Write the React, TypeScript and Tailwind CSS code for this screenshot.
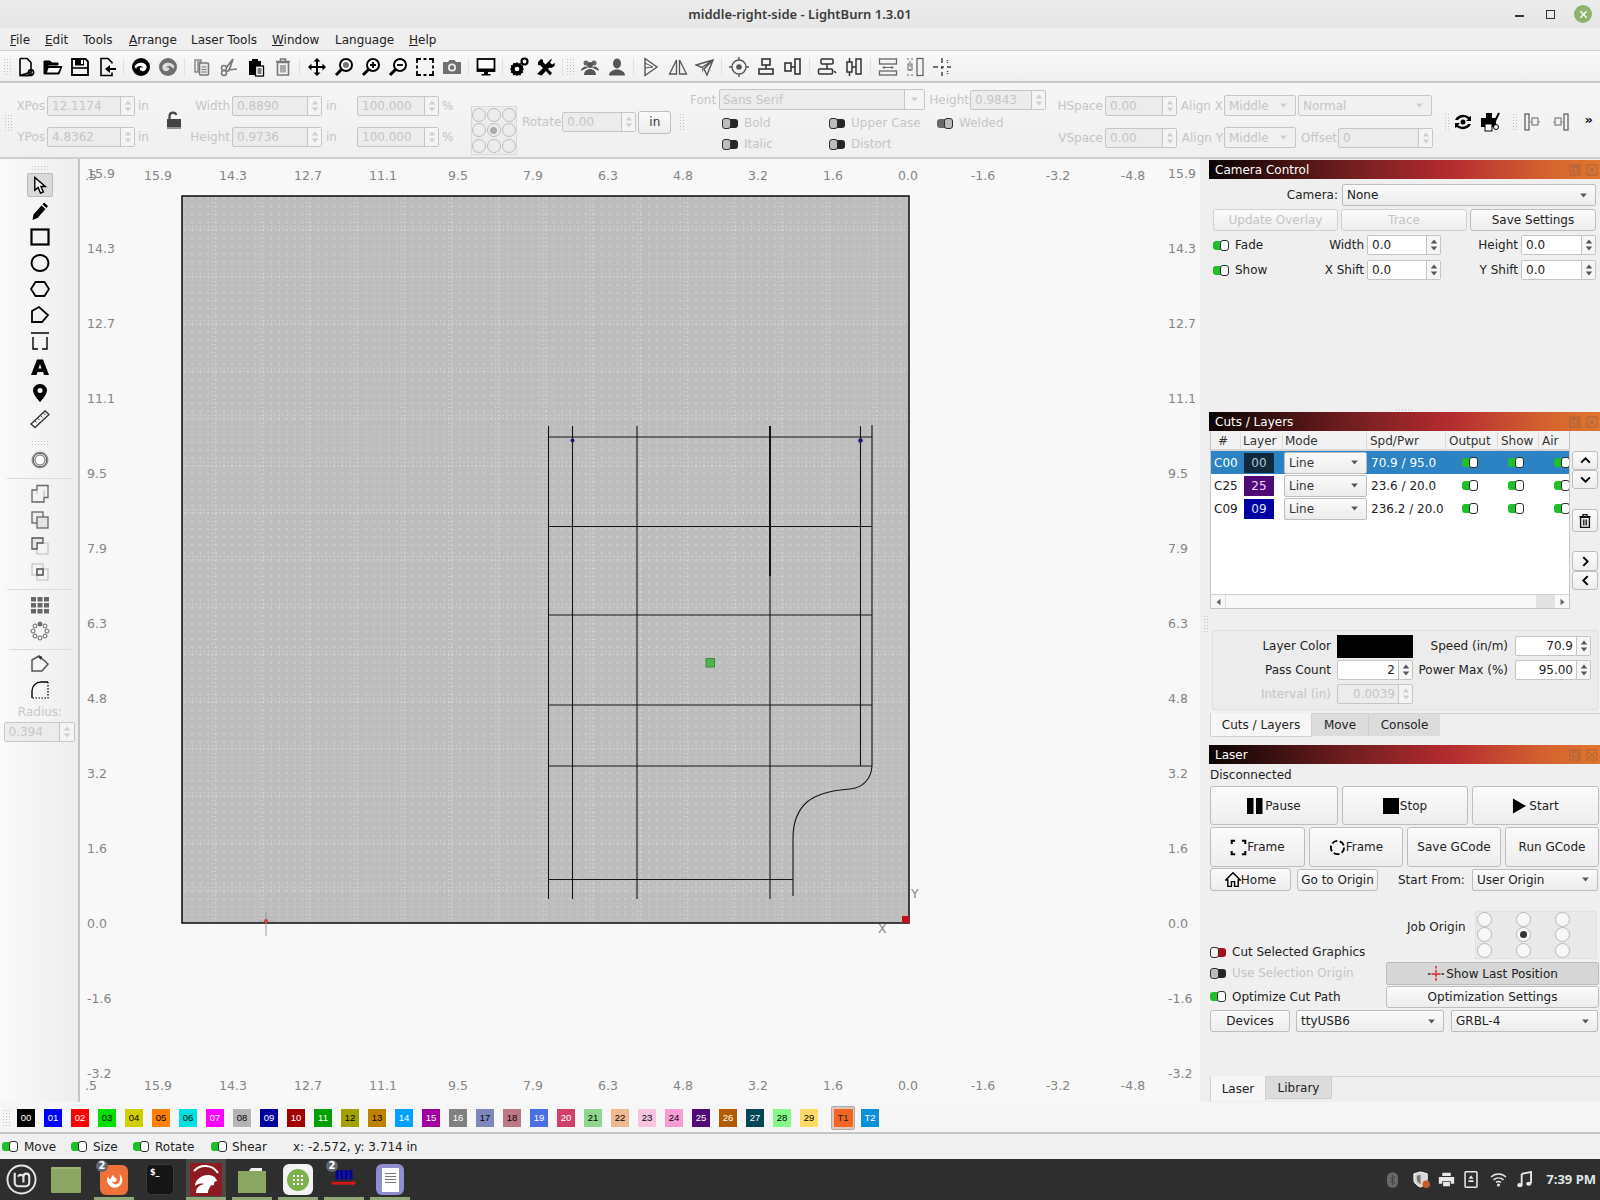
import React from "react";

type P = { className?: string; children?: React.ReactNode };

const Svg = ({ s = 20, className = "", children }: { s?: number; className?: string; children?: React.ReactNode }) => (
  <svg viewBox="0 0 20 20" width={s} height={s} className={className}>{children}</svg>
);

const Grip = ({ className = "" }: P) => (
  <div className={"bg-[radial-gradient(#c2c2c2_0.7px,transparent_0.8px)] bg-[length:3px_3px] shrink-0 " + className} />
);

const Caret = ({ className = "" }: P) => (
  <svg viewBox="0 0 10 6" width="9" height="5" className={className}><path d="M1 0.5h8L5 5.5z" fill="currentColor" /></svg>
);

const Spin = ({ className = "", value, off, right, col = "w-[14px]" }: { className?: string; value: string; off?: boolean; right?: boolean; col?: string }) => (
  <div className={"flex h-[20px] shrink-0 border rounded-[2px] " + (off ? "border-[#c6c6c6] bg-[#ececec] text-[#c6c6c6] " : "border-[#c4c4c4] bg-white text-[#222] ") + className}>
    <div className={"flex-1 min-w-0 flex items-center px-[4px] " + (right ? "justify-end pr-[3px]" : "")}>{value}</div>
    <div className={"flex flex-col items-center justify-center gap-[2px] border-l " + col + (off ? " border-[#c6c6c6] bg-[#f4f4f4] text-[#cfcfcf]" : " border-[#c4c4c4] bg-[#f5f5f5] text-[#555]")}>
      <svg viewBox="0 0 10 6" width="8" height="5"><path d="M1 5.5h8L5 .5z" fill="currentColor" /></svg>
      <svg viewBox="0 0 10 6" width="8" height="5"><path d="M1 .5h8L5 5.5z" fill="currentColor" /></svg>
    </div>
  </div>
);

const Combo = ({ className = "", value, off }: { className?: string; value: string; off?: boolean }) => (
  <div className={"flex items-center justify-between shrink-0 rounded-[2px] border pl-[4px] pr-[7px] " + (off ? "border-[#c6c6c6] bg-[#f1f1f1] text-[#c6c6c6] " : "border-[#bdbdbd] bg-linear-to-b from-[#fbfbfb] to-[#ececec] text-[#222] ") + className}>
    <span>{value}</span>
    <Caret className={off ? "text-[#cfcfcf]" : "text-[#555]"} />
  </div>
);

const Btn = ({ className = "", children, off }: { className?: string; children?: React.ReactNode; off?: boolean }) => (
  <div className={"flex items-center justify-center shrink-0 rounded-[3px] border bg-linear-to-b from-[#fbfbfb] to-[#ededed] " + (off ? "border-[#d2d2d2] text-[#c4c4c4] " : "border-[#bdbdbd] text-[#222] ") + className}>{children}</div>
);

const Toggle = ({ kind = "on" }: { kind?: "on" | "red" | "dark" | "greyR" }) => {
  if (kind === "on" || kind === "greyR") {
    return (
      <div className="flex items-center w-[16px] h-[11px] shrink-0">
        <div className={"w-[9px] h-[9px] rounded-l-[3px] " + (kind === "on" ? "bg-[#1ec02a]" : "bg-[#686868]")} />
        <div className={"w-[9px] h-[11px] ml-[-2px] rounded-[3px] border border-[#2e2e2e] " + (kind === "on" ? "bg-white" : "bg-[#bbbbbb]")} />
      </div>
    );
  }
  return (
    <div className="flex items-center w-[16px] h-[11px] shrink-0">
      <div className={"relative z-10 w-[9px] h-[11px] rounded-[3px] border border-[#2e2e2e] " + (kind === "red" ? "bg-[#f2f2f2]" : "bg-[#bdbdbd]")} />
      <div className={"w-[9px] h-[9px] ml-[-2px] rounded-r-[3px] " + (kind === "red" ? "bg-[#a5121c]" : "bg-[#262626]")} />
    </div>
  );
};

const Title = ({ children }: P) => (
  <div className="flex items-center justify-between h-[19px] shrink-0 pl-[6px] pr-[2px] text-white bg-[linear-gradient(90deg,#0a0404_0%,#6f1d1e_35%,#b52c30_62%,#d3602f_85%,#e0762e_100%)]">
    <span>{children}</span>
    <span className="flex gap-[5px] opacity-40">
      <svg viewBox="0 0 12 12" width="12" height="12"><rect x="1" y="1" width="10" height="10" fill="none" stroke="#555" /><rect x="4" y="3" width="5" height="5" fill="none" stroke="#555" /></svg>
      <svg viewBox="0 0 12 12" width="12" height="12"><rect x="1" y="1" width="10" height="10" fill="none" stroke="#555" /><path d="M3 3l6 6M9 3l-6 6" stroke="#555" /></svg>
    </span>
  </div>
);

const k = "#000";
const ToolIcons: React.ReactNode[][] = [
  [
    <Svg key="n"><path d="M4 1.500h7l4 4v9M15 15v3.500H4z" fill="none" stroke={k} strokeWidth="1.600" /><path d="M4 1.500v17h9" fill="none" stroke={k} strokeWidth="1.600" /><circle cx="15" cy="15.500" r="2.600" fill="none" stroke={k} strokeWidth="1.600" /></Svg>,
    <Svg key="o"><path d="M1 17V4h6l2 2h6v2H5L2.500 15 5 9.500h14L16 17z" fill={k} stroke={k} strokeWidth="1" /><path d="M5.500 11h11.500L15 15.500H4z" fill="#fff" /></Svg>,
    <Svg key="s"><path d="M2 2h13.500L18 4.500V18H2z" fill="none" stroke={k} strokeWidth="1.800" /><rect x="5" y="2" width="9" height="6.500" fill={k} /><rect x="11" y="3" width="2" height="4" fill="#fff" /><path d="M2 11h16" stroke={k} strokeWidth="1.600" /></Svg>,
    <Svg key="sa"><path d="M15 6.500V5.500l-4-4H4v17h11v-3" fill="none" stroke={k} strokeWidth="1.600" /><path d="M19 11h-6V8l-5 4 5 4v-3h6z" fill={k} /></Svg>,
  ],
  [
    <Svg key="u"><circle cx="10" cy="10" r="9" fill={k} /><path d="M3.500 9.500C5 5.500 11 4.500 14 7c2.500 2 2 6-1 7-2.500.8-5-1-4-3 .6-1.200 2.500-1 3 0-.5-2.500-5.500-3-7 1z" fill="#fff" /></Svg>,
    <Svg key="r"><circle cx="10" cy="10" r="9" fill="#6e6e6e" /><path d="M16.500 9.500C15 5.500 9 4.500 6 7c-2.500 2-2 6 1 7 2.500.8 5-1 4-3-.6-1.200-2.500-1-3 0 .5-2.500 5.500-3 7 1z" fill="#ddd" /></Svg>,
  ],
  [
    <Svg key="c"><path d="M3 3h6v2H6v10H3z" fill="none" stroke="#888" strokeWidth="1.500" /><rect x="7.500" y="6" width="9" height="12" rx="1" fill="#e8e8e8" stroke="#777" strokeWidth="1.500" /><path d="M9.500 10h5M9.500 12.500h5M9.500 15h5" stroke="#777" /></Svg>,
    <Svg key="x"><circle cx="5" cy="11" r="2.500" fill="none" stroke="#777" strokeWidth="1.500" /><circle cx="5" cy="16" r="2.500" fill="none" stroke="#777" strokeWidth="1.500" /><path d="M7 11L14 2 10 13.500 7.500 14.500M9 13l9-1" fill="none" stroke="#777" strokeWidth="1.700" /></Svg>,
    <Svg key="p"><path d="M3 4h3V2h6v2h3v5h-5v9H3z" fill={k} /><rect x="9.500" y="9" width="8" height="10" fill="#fff" stroke={k} strokeWidth="1.300" /><path d="M11.500 12h4M11.500 14h4M11.500 16h4" stroke={k} /></Svg>,
    <Svg key="d"><path d="M3 4.500h14M7.500 4.500V2h5v2.500M4.500 5.500V18h11V5.500z" fill="none" stroke="#777" strokeWidth="1.600" /><path d="M8 8v7.500M10 8v7.500M12 8v7.500" stroke="#777" strokeWidth="1.200" /></Svg>,
  ],
  [
    <Svg key="m"><path d="M10 1l3.500 3.500H11V9h4.500V6.500L19 10l-3.500 3.500V11H11v4.500h2.500L10 19l-3.500-3.500H9V11H4.500v2.500L1 10l3.500-3.500V9H9V4.500H6.500z" fill={k} /></Svg>,
    <Svg key="zf"><circle cx="12" cy="8" r="6" fill="#fff" stroke={k} strokeWidth="2" /><circle cx="12" cy="8" r="3" fill="#777" /><path d="M7.500 12.500L2 18" stroke={k} strokeWidth="3" /></Svg>,
    <Svg key="zi"><circle cx="12" cy="8" r="6" fill="#fff" stroke={k} strokeWidth="2" /><path d="M9 8h6M12 5v6" stroke={k} strokeWidth="1.800" /><path d="M7.500 12.500L2 18" stroke={k} strokeWidth="3" /></Svg>,
    <Svg key="zo"><circle cx="12" cy="8" r="6" fill="#fff" stroke={k} strokeWidth="2" /><path d="M9 8h6" stroke={k} strokeWidth="1.800" /><path d="M7.500 12.500L2 18" stroke={k} strokeWidth="3" /></Svg>,
    <Svg key="fr"><path d="M2 6V2h4M14 2h4v4M18 14v4h-4M6 18H2v-4M8.500 2h3M8.500 18h3M2 8.500v3M18 8.500v3" fill="none" stroke={k} strokeWidth="1.800" /></Svg>,
    <Svg key="ca"><path d="M1 5h5l1.500-2h5L14 5h5v12H1z" fill="#6f6f6f" /><circle cx="10" cy="10.500" r="4" fill="#eee" /><circle cx="10" cy="10.500" r="2.300" fill="#6f6f6f" /></Svg>,
  ],
  [<Svg key="mon"><rect x="1.500" y="2" width="17" height="12" fill="#fff" stroke={k} strokeWidth="1.800" /><rect x="1.500" y="11.500" width="17" height="3" fill={k} /><path d="M8 14.500h4v2.500h2.500v1.500h-9V17H8z" fill={k} /></Svg>],
  [
    <Svg key="g"><path d="M8 5l1.500 1.500 2-.5.800 2 2 .8-.5 2L15 12l-1.200 1.600.5 2-2 .8-.8 2-2-.5L8 19l-1.500-1.100-2 .5-.8-2-2-.8.500-2L1 12l1.200-1.500-.5-2 2-.8.800-2 2 .5z" fill={k} /><circle cx="8" cy="12" r="2.300" fill="#fff" /><circle cx="15.500" cy="4.500" r="3" fill="none" stroke={k} strokeWidth="2.200" /></Svg>,
    <Svg key="w"><path d="M2 5l3-3 2 1 0 2 2.500 2.500L15 2l1 .5-2 3 2 2 3-1.500-.5 3-3 2-2-.5-1.500 1.500 4 4-2 2.500-4-4.500-4.500 4.500L1 17l6-6-2.500-2.500L2 8z" fill={k} /></Svg>,
  ],
];
const ToolIcons2: React.ReactNode[][] = [
  [
    <Svg key="gr"><circle cx="6" cy="6" r="2.500" fill="#666" /><circle cx="14" cy="6" r="2.500" fill="#666" /><circle cx="10" cy="8" r="3" fill="#555" /><path d="M1 14c0-3 3-4.500 5-4.500l2 1M19 14c0-3-3-4.500-5-4.500l-2 1M4 18c0-4 3-6 6-6s6 2 6 6z" fill="#555" /></Svg>,
    <Svg key="pe"><ellipse cx="10" cy="6.500" rx="4" ry="5" fill="#555" /><path d="M2 18.500c0-4 4-5 6-6h4c2 1 6 2 6 6z" fill="#555" /></Svg>,
  ],
  [
    <Svg key="f"><path d="M4 1.500v17l12-8.500z" fill="none" stroke="#555" strokeWidth="1.400" /><path d="M4 6l8 4-8 1" fill="none" stroke="#555" /></Svg>,
    <Svg key="mi"><path d="M8.500 3L1.500 17h7zM11.500 3l7 14h-7z" fill="none" stroke="#555" strokeWidth="1.300" /></Svg>,
    <Svg key="pl"><path d="M18 3L1 8l6 2.500L18 3 9 12l3 6z" fill="none" stroke="#555" strokeWidth="1.400" /><path d="M7 10.500V16l2-4" fill="#777" /></Svg>,
  ],
  [
    <Svg key="t"><circle cx="10" cy="10" r="7" fill="none" stroke="#555" strokeWidth="1.400" /><circle cx="10" cy="10" r="2.800" fill="#555" /><path d="M10 0v3M10 17v3M0 10h3M17 10h3" stroke="#555" strokeWidth="1.400" /></Svg>,
    <Svg key="ab"><rect x="6" y="2" width="8" height="6" fill="none" stroke="#333" strokeWidth="1.600" /><rect x="3" y="12" width="14" height="5" fill="none" stroke="#333" strokeWidth="1.600" /><path d="M10 8v4" stroke="#333" strokeWidth="1.600" /></Svg>,
    <Svg key="ar"><rect x="2" y="6" width="6" height="8" fill="none" stroke="#333" strokeWidth="1.600" /><rect x="12" y="2" width="5" height="15" fill="none" stroke="#333" strokeWidth="1.600" /><path d="M8 10h4" stroke="#333" strokeWidth="1.600" /></Svg>,
  ],
  [
    <Svg key="ch"><rect x="4" y="2" width="12" height="5" rx="1" fill="none" stroke="#333" strokeWidth="1.500" /><rect x="1.500" y="12" width="14" height="5" rx="1" fill="none" stroke="#333" strokeWidth="1.500" /><path d="M10 7v5M17 14l2 2" stroke="#333" strokeWidth="1.500" /></Svg>,
    <Svg key="cv"><rect x="3" y="5" width="5" height="10" fill="none" stroke="#333" strokeWidth="1.500" /><rect x="12" y="2" width="5" height="15" fill="none" stroke="#333" strokeWidth="1.500" /><path d="M5.500 1v4M5.500 15v4M8 10h4" stroke="#333" strokeWidth="1.500" /></Svg>,
  ],
  [
    <Svg key="dh"><rect x="1.500" y="2" width="17" height="5" fill="none" stroke="#666" strokeWidth="1.300" /><rect x="1.500" y="14" width="17" height="4" fill="none" stroke="#666" strokeWidth="1.300" /><path d="M5 10.500h10M6.500 9l-1.500 1.500 1.500 1.500M13.500 9l1.500 1.500-1.500 1.500" stroke="#666" fill="none" /></Svg>,
    <Svg key="dv"><rect x="12" y="1.500" width="6" height="17" fill="none" stroke="#666" strokeWidth="1.300" /><path d="M2 2h6M2 18h6M5 4v12" stroke="#666" strokeDasharray="2 2" fill="none" /><rect x="3" y="7" width="4" height="6" fill="none" stroke="#666" /></Svg>,
    <Svg key="cc"><path d="M10 1v5M10 9v3M10 15v4M1 10h5M9 10h3M15 10h4" stroke="#444" strokeWidth="1.500" /><path d="M15.500 14v3M15.500 3v3" stroke="#444" strokeDasharray="1 1" strokeWidth="1.500" /></Svg>,
  ],
];

const Slot = ({ children, className = "" }: P) => <div className={"flex items-center justify-center w-[27px] h-full shrink-0 " + className}>{children}</div>;
const Sep = ({ className = "w-[7px]" }: P) => (
  <div className={"flex items-center justify-center h-full shrink-0 " + className}><div className="w-px h-[18px] bg-[#e2e2e2]" /></div>
);

const swatches: [string, string, string][] = [
  ["00", "bg-[#000000]", "text-white"], ["01", "bg-[#0000ff]", "text-white"], ["02", "bg-[#ff0000]", "text-white"], ["03", "bg-[#00e000]", "text-black"],
  ["04", "bg-[#d0d000]", "text-black"], ["05", "bg-[#ff8000]", "text-black"], ["06", "bg-[#00e0e0]", "text-black"], ["07", "bg-[#ff00ff]", "text-white"],
  ["08", "bg-[#b4b4b4]", "text-black"], ["09", "bg-[#0000a0]", "text-white"], ["10", "bg-[#a00000]", "text-white"], ["11", "bg-[#00a000]", "text-white"],
  ["12", "bg-[#a0a000]", "text-black"], ["13", "bg-[#c08000]", "text-black"], ["14", "bg-[#00a0ff]", "text-white"], ["15", "bg-[#a000a0]", "text-white"],
  ["16", "bg-[#808080]", "text-white"], ["17", "bg-[#7d87b9]", "text-black"], ["18", "bg-[#bb7784]", "text-black"], ["19", "bg-[#4a6fe3]", "text-white"],
  ["20", "bg-[#d33f6a]", "text-white"], ["21", "bg-[#8cd78c]", "text-black"], ["22", "bg-[#f0b98d]", "text-black"], ["23", "bg-[#f6c4e1]", "text-black"],
  ["24", "bg-[#f79cd4]", "text-black"], ["25", "bg-[#500a78]", "text-white"], ["26", "bg-[#b45a00]", "text-white"], ["27", "bg-[#004754]", "text-white"],
  ["28", "bg-[#86fa88]", "text-black"], ["29", "bg-[#ffdb66]", "text-black"],
];

const TOP = ["17.5", "15.9", "14.3", "12.7", "11.1", "9.5", "7.9", "6.3", "4.8", "3.2", "1.6", "0.0", "-1.6", "-3.2", "-4.8"];
const SIDE = ["15.9", "14.3", "12.7", "11.1", "9.5", "7.9", "6.3", "4.8", "3.2", "1.6", "0.0", "-1.6", "-3.2"];

const Canvas = () => (
  <div className="relative w-[1120px] shrink-0 bg-[#f8f8f8] overflow-hidden text-[12.5px] text-[#858585]">
    {TOP.map((t, i) => (
      <React.Fragment key={t}>
        <span className="absolute w-[50px] text-center top-[11px]" style={{ left: 83 + 75 * i - 80 - 25 }}>{t}</span>
        <span className="absolute w-[50px] text-center top-[921px]" style={{ left: 83 + 75 * i - 80 - 25 }}>{t}</span>
      </React.Fragment>
    ))}
    <div className="absolute left-0 top-0 bottom-0 w-[5px] bg-[#f8f8f8]" />
    {SIDE.map((t, i) => (
      <React.Fragment key={t}>
        <span className="absolute left-[7px]" style={{ top: 173.5 + 75 * i - 159 - 6 }}>{t}</span>
        <span className="absolute left-[1088px]" style={{ top: 173.5 + 75 * i - 159 - 6 }}>{t}</span>
      </React.Fragment>
    ))}
    <svg viewBox="182 196 727 728" width="727" height="728" className="absolute left-[102px] top-[37px] overflow-visible">
      <defs>
        <pattern id="minor" x="212" y="226" width="7.87" height="7.87" patternUnits="userSpaceOnUse">
          <rect x="3" y="3" width="2" height="2" fill="#cbcbcb" />
        </pattern>
        <pattern id="major" x="212" y="226" width="47.2" height="47.2" patternUnits="userSpaceOnUse">
          <g fill="#dedede">
            {Array.from({ length: 12 }).map((_, i) => (
              <React.Fragment key={i}>
                <rect x="0" y={i * 3.93} width="1" height="1" />
                <rect x="3" y={i * 3.93} width="1" height="1" />
                <rect x={i * 3.93} y="0" width="1" height="1" />
                <rect x={i * 3.93} y="3" width="1" height="1" />
              </React.Fragment>
            ))}
          </g>
        </pattern>
      </defs>
      <rect x="182" y="196" width="727" height="727" fill="#bdbdbd" />
      <rect x="182" y="196" width="727" height="727" fill="url(#minor)" />
      <rect x="182" y="196" width="727" height="727" fill="url(#major)" />
      <rect x="182" y="196" width="727" height="727" fill="none" stroke="#0a0a0a" strokeWidth="1.500" />
      <g stroke="#151515" strokeWidth="1.100" fill="none">
        <path d="M548.500 426V899M572.500 426V899M637 426V899M770 426V899M860.500 426V766M872 425V766" />
        <path d="M548 437H872M548 526.500H872M548 615H872M548 705H872M548 766H872M548 879.500H793" />
        <path d="M872 766C871 780 862 788 850 789 C835 790 818 793 807 802 C797 811 793 822 793 838 V896" />
        <path d="M770 426V576" strokeWidth="2" />
      </g>
      <circle cx="572.500" cy="440.500" r="2" fill="#1b1b70" />
      <circle cx="860.500" cy="440.500" r="2.300" fill="#1b1b70" />
      <rect x="706" y="658.500" width="8.500" height="8.500" fill="#4fb54f" stroke="#3d8a3d" />
      <path d="M266 912V936" stroke="#999" />
      <path d="M258 921H274" stroke="#aaa" />
      <circle cx="266" cy="921" r="2" fill="#d83a3a" />
      <rect x="902" y="916" width="7" height="7" fill="#c4101c" />
    </svg>
    <span className="absolute left-[831px] top-[729px]">Y</span>
    <span className="absolute left-[798px] top-[764px]">X</span>
  </div>
);

const Ltool = ({ children }: P) => <div className="flex items-center justify-center w-[26px] h-[26px]">{children}</div>;
const LeftBar = () => (
  <div className="flex flex-col items-center w-[80px] shrink-0 pl-[2px] border-r-2 border-[#c4c4c4] bg-linear-to-r from-[#fafafa] to-[#eeeeee] text-[#c8c8c8]">
    <Grip className="w-[18px] h-[6px] mt-[6px] mb-[2px]" />
    <div className="flex items-center justify-center w-[26px] h-[24px] mb-[1px] bg-[#d9d9d9] border border-[#bbb] rounded-[2px]"><Svg s={19}><path d="M4 1.500V15l3.500-3 2.500 6 3-1.300-2.500-5.700H15z" fill="#fff" stroke={k} strokeWidth="1.500" /></Svg></div>
    <Ltool><Svg><path d="M14 1.500l4 3.500-1.500 2-4-3.500zM11.500 4.500l4 3.500-8 9-5 2 1-5.500z" fill={k} /></Svg></Ltool>
    <Ltool><Svg><rect x="1.500" y="2.500" width="17" height="15" fill="none" stroke={k} strokeWidth="2.200" /></Svg></Ltool>
    <Ltool><Svg><ellipse cx="10" cy="10" rx="8.500" ry="8" fill="none" stroke={k} strokeWidth="2" /></Svg></Ltool>
    <Ltool><Svg><path d="M1 10l4.500-7h9L19 10l-4.500 7h-9z" fill="none" stroke={k} strokeWidth="1.800" /></Svg></Ltool>
    <Ltool><Svg><path d="M2 6l7-4 9 8-6 7H2z" fill="none" stroke={k} strokeWidth="1.800" /></Svg></Ltool>
    <Ltool><Svg><path d="M1 2h18" stroke={k} strokeWidth="1.500" /><path d="M3 6v12h5M12 18h5V6" fill="none" stroke={k} strokeWidth="1.400" /></Svg></Ltool>
    <Ltool><Svg><path d="M7 2.500h6L19 18h-5l-1-3H7.500l-1 3H1zM8.500 11.500h3L10 7z" fill={k} fillRule="evenodd" /></Svg></Ltool>
    <Ltool><Svg><path d="M10 1c-4 0-7 3-7 6.500C3 12 10 19 10 19s7-7 7-11.500C17 4 14 1 10 1z" fill={k} /><circle cx="10" cy="7.500" r="2.500" fill="#fff" /></Svg></Ltool>
    <Ltool><Svg><path d="M1 15L15 2l4 3.500L5 18.500z" fill="none" stroke="#333" strokeWidth="1.300" /><path d="M5 12l1.500 1.500M8 9.500l1.500 1.500M11 7l1.500 1.500M14 4.500l1.500 1.500" stroke="#333" /></Svg></Ltool>
    <Grip className="w-[18px] h-[6px] mt-[8px] mb-[1px]" />
    <Ltool><Svg><circle cx="10" cy="10" r="8.500" fill="#999" /><circle cx="10" cy="10" r="6.800" fill="#eee" stroke="#555" /><circle cx="10" cy="10" r="5" fill="#fff" stroke="#666" /></Svg></Ltool>
    <div className="w-[66px] h-px bg-[#dcdcdc] mt-[5px]" />
    <div className="mt-[2px]" />
    <Ltool><Svg><path d="M7 1.500h11v12h-4V18H2V6h5z" fill="#f2f2f2" stroke="#666" strokeWidth="1.300" /><path d="M7 6v4M14 6v7" stroke="#bbb" /></Svg></Ltool>
    <Ltool><Svg><rect x="2" y="2" width="11" height="11" fill="#eee" stroke="#666" strokeWidth="1.300" /><rect x="7" y="7" width="11" height="11" fill="#e4e4e4" stroke="#666" strokeWidth="1.300" /></Svg></Ltool>
    <Ltool><Svg><rect x="7" y="7" width="11" height="11" fill="#f4f4f4" stroke="#bbb" /><path d="M2 2h11v5H7v6H2z" fill="#e8e8e8" stroke="#555" strokeWidth="1.300" /></Svg></Ltool>
    <Ltool><Svg><rect x="2" y="2" width="11" height="11" fill="none" stroke="#bbb" /><rect x="7" y="7" width="11" height="11" fill="none" stroke="#bbb" /><rect x="7" y="7" width="6" height="6" fill="#eee" stroke="#555" strokeWidth="1.500" /></Svg></Ltool>
    <div className="w-[66px] h-px bg-[#dcdcdc] mt-[4px]" />
    <div className="mt-[2px]" />
    <Ltool><Svg><path d="M1 2h5v4.500H1zM7.500 2h5v4.500h-5zM14 2h5v4.500h-5zM1 8h5v4.500H1zM7.500 8h5v4.500h-5zM14 8h5v4.500h-5zM1 14h5v4.500H1zM7.500 14h5v4.500h-5zM14 14h5v4.500h-5z" fill="#666" /></Svg></Ltool>
    <Ltool><Svg><g fill="#f4f4f4" stroke="#666" strokeWidth="1"><circle cx="10" cy="3" r="2" fill="#666" /><circle cx="15" cy="5" r="2" /><circle cx="17" cy="10" r="2" /><circle cx="15" cy="15" r="2" /><circle cx="10" cy="17" r="2" /><circle cx="5" cy="15" r="2" /><circle cx="3" cy="10" r="2" /><circle cx="5" cy="5" r="2" /></g></Svg></Ltool>
    <div className="w-[62px] h-px bg-[#dcdcdc] mt-[5px] mb-[1px]" />
    <Ltool><Svg><path d="M2 6l7-4 9 8-6 7H2z" fill="none" stroke="#555" strokeWidth="1.500" /><path d="M8 3l4-1-1 4z" fill="#333" /></Svg></Ltool>
    <Ltool><Svg><path d="M2 18V11C2 6 6 2 11 2h7" fill="none" stroke={k} strokeWidth="1.400" /><path d="M18 2v16H2" fill="none" stroke={k} strokeWidth="1.200" strokeDasharray="1.500 1.500" /></Svg></Ltool>
    <div className="h-[18px] flex items-center">Radius:</div>
    <Spin off value="0.394" className="w-[71px] mt-[1px] mr-[2px]" col="w-[15px]" />
  </div>
);

const Panel2 = () => (
  <div className="flex h-[76px] shrink-0 border-b-2 border-[#cfcfcf] bg-linear-to-b from-[#f6f6f6] to-[#efefef] text-[#c6c6c6]">
    <div className="flex w-[160px] shrink-0 pt-[13px]">
      <Grip className="w-[9px] h-[18px] mt-[18px] ml-[4px]" />
      <div className="flex flex-col gap-[11px] ml-[2px]">
        <div className="flex items-center"><span className="w-[30px] text-right">XPos</span><Spin off value="12.1174" className="w-[88px] ml-[2px]" /><span className="ml-[3px]">in</span></div>
        <div className="flex items-center"><span className="w-[30px] text-right">YPos</span><Spin off value="4.8362" className="w-[88px] ml-[2px]" /><span className="ml-[3px]">in</span></div>
      </div>
    </div>
    <div className="flex items-center justify-center w-[28px] shrink-0">
      <svg viewBox="0 0 16 18" width="16" height="20"><path d="M3.500 8V5a3.500 3.500 0 016.800-1" fill="none" stroke="#444" strokeWidth="2.200" /><rect x="1" y="8" width="14" height="8" fill="#444" /><path d="M1 17h14" stroke="#333" /></svg>
    </div>
    <div className="flex flex-col gap-[11px] pt-[13px] w-[169px] shrink-0">
      <div className="flex items-center"><span className="w-[42px] text-right">Width</span><Spin off value="0.8890" className="w-[90px] ml-[2px]" /><span className="ml-[4px]">in</span></div>
      <div className="flex items-center"><span className="w-[42px] text-right">Height</span><Spin off value="0.9736" className="w-[90px] ml-[2px]" /><span className="ml-[4px]">in</span></div>
    </div>
    <div className="flex flex-col gap-[11px] pt-[13px] w-[114px] shrink-0">
      <div className="flex items-center"><Spin off value="100.000" className="w-[82px]" /><span className="ml-[3px]">%</span></div>
      <div className="flex items-center"><Spin off value="100.000" className="w-[82px]" /><span className="ml-[3px]">%</span></div>
    </div>
    <div className="w-[46px] h-[49px] mt-[23px] shrink-0 grid grid-cols-3 place-items-center bg-[#ececec] border border-[#dadada]">
      {[0, 1, 2, 3, 4, 5, 6, 7, 8].map((i) => (
        <div key={i} className="flex items-center justify-center w-[14px] h-[14px] rounded-full border border-[#bdbdbd]">{i === 4 && <div className="w-[7px] h-[7px] rounded-full bg-[#aaaaaa]" />}</div>
      ))}
    </div>
    <div className="flex items-center w-[167px] shrink-0 pl-[5px] pt-[4px]">
      <span className="w-[41px]">Rotate</span>
      <Spin off value="0.00" className="w-[74px] ml-[1px]" />
      <Btn className="w-[33px] h-[23px] ml-[2px] !text-[#333]">in</Btn>
      <Grip className="w-[6px] h-[18px] ml-[8px]" />
    </div>
    <div className="flex flex-col w-[372px] shrink-0 pt-[6px] pl-[6px]">
      <div className="flex items-center h-[21px]">
        <span className="w-[29px]">Font</span>
        <div className="flex items-center w-[206px] h-[21px] border border-[#c6c6c6] rounded-[2px] bg-[#ececec] pl-[3px]"><span className="flex-1">Sans Serif</span><div className="flex items-center justify-center w-[20px] h-full border-l border-[#c6c6c6] bg-[#f4f4f4]"><Caret className="text-[#cfcfcf]" /></div></div>
        <span className="w-[44px] text-right">Height</span>
        <Spin off value="0.9843" className="w-[76px] ml-[1px]" />
      </div>
      <div className="flex items-center mt-[2.500px] h-[21px] pl-[32px]">
        <div className="flex items-center w-[107px] gap-[6px]"><Toggle kind="dark" /><span>Bold</span></div>
        <div className="flex items-center w-[108px] gap-[6px]"><Toggle kind="dark" /><span>Upper Case</span></div>
        <div className="flex items-center gap-[6px]"><Toggle kind="greyR" /><span>Welded</span></div>
      </div>
      <div className="flex items-center h-[21px] pl-[32px]">
        <div className="flex items-center w-[107px] gap-[6px]"><Toggle kind="dark" /><span>Italic</span></div>
        <div className="flex items-center gap-[6px]"><Toggle kind="dark" /><span>Distort</span></div>
      </div>
    </div>
    <div className="flex flex-col gap-[11px] pt-[12px] w-[388px] shrink-0">
      <div className="flex items-center h-[21px]">
        <span className="w-[47px] text-right">HSpace</span>
        <Spin off value="0.00" className="w-[72px] ml-[2px]" />
        <span className="w-[46px] text-right">Align X</span>
        <Combo off value="Middle" className="w-[72px] h-[21px] ml-[1px]" />
        <Combo off value="Normal" className="w-[134px] h-[21px] ml-[2px]" />
      </div>
      <div className="flex items-center h-[21px]">
        <span className="w-[47px] text-right">VSpace</span>
        <Spin off value="0.00" className="w-[72px] ml-[2px]" />
        <span className="w-[46px] text-right">Align Y</span>
        <Combo off value="Middle" className="w-[72px] h-[21px] ml-[1px]" />
        <span className="w-[39px] text-right ml-[2px]">Offset</span>
        <Spin off value="0" className="w-[95px] ml-[1px]" />
      </div>
    </div>
    <div className="flex items-center shrink-0 pt-[4px]">
      <Grip className="w-[6px] h-[18px]" />
      <div className="flex items-center justify-center w-[24px] ml-[1px]"><Svg><path d="M2 8C4 3 11 1 16 5l2-1v5h-5l2-2C12 4 7 5 5 8z" fill={k} /><path d="M18 12c-2 5-9 7-14 3l-2 1v-5h5l-2 2c3 3 8 2 10-1z" fill={k} /><circle cx="10" cy="10" r="2.500" fill={k} /></Svg></div>
      <div className="flex items-center justify-center w-[27px] ml-[1.500px]"><Svg><path d="M6 1h6v5h4v9H1V6h5z" fill={k} /><path d="M19 1l-5 10" stroke={k} strokeWidth="2" /><circle cx="16" cy="15" r="2.500" fill="#fff" stroke={k} /><rect x="5" y="12" width="7" height="7" fill="#fff" stroke={k} /></Svg></div>
      <Grip className="w-[6px] h-[18px] ml-[8px]" />
      <div className="flex items-center justify-center w-[24px] ml-[2px]"><Svg><rect x="3" y="2" width="4" height="16" fill="none" stroke="#555" strokeWidth="1.200" /><rect x="10" y="6" width="6" height="7" fill="none" stroke="#666" /><path d="M7 10h3M16 10h2" stroke="#888" /></Svg></div>
      <div className="flex items-center justify-center w-[24px] ml-[5px]"><Svg><rect x="13" y="2" width="4" height="16" fill="none" stroke="#555" strokeWidth="1.200" /><rect x="4" y="6" width="6" height="7" fill="none" stroke="#666" /><path d="M10 10h3M2 10h2" stroke="#888" /></Svg></div>
      <span className="ml-[12px] mt-[-6px] text-[13px] font-bold text-[#111]">»</span>
    </div>
  </div>
);

const Chk = ({ t, w = "w-[40px]" }: { t: string; w?: string }) => (
  <div className={"flex items-center gap-[6px] " + w}><Toggle />{t}</div>
);

const Dock = () => (
  <div className="flex flex-col w-[400px] shrink-0 pl-[9px] pr-[2px] bg-[#efefef] text-[#222]">
    <div className="mt-[1px] mr-[-2px]"><Title>Camera Control</Title></div>
    <div className="flex items-center mt-[5px] h-[22px]">
      <span className="w-[129px] text-right">Camera:</span>
      <Combo value="None" className="w-[254px] h-[22px] ml-[4px]" />
    </div>
    <div className="flex items-center gap-[3px] mt-[3px] pl-[4px]">
      <Btn off className="w-[125px] h-[22px]">Update Overlay</Btn>
      <Btn off className="w-[126px] h-[22px]">Trace</Btn>
      <Btn className="w-[126px] h-[22px]">Save Settings</Btn>
    </div>
    <div className="flex items-center mt-[4px] h-[20px] pl-[4px]">
      <Chk t="Fade" w="w-[110px]" />
      <span className="w-[41px] text-right">Width</span>
      <Spin value="0.0" className="w-[74px] ml-[3px]" />
      <span className="w-[77px] text-right">Height</span>
      <Spin value="0.0" className="w-[75px] ml-[3px]" />
    </div>
    <div className="flex items-center mt-[5px] h-[20px] pl-[4px]">
      <Chk t="Show" w="w-[100px]" />
      <span className="w-[51px] text-right">X Shift</span>
      <Spin value="0.0" className="w-[74px] ml-[3px]" />
      <span className="w-[77px] text-right">Y Shift</span>
      <Spin value="0.0" className="w-[75px] ml-[3px]" />
    </div>
    <div className="h-[132px] shrink-0 flex justify-center items-end"><Grip className="w-[18px] h-[3px] mb-[1px]" /></div>

    <div className="mr-[-2px]"><Title>Cuts / Layers</Title></div>
    <div className="flex h-[178px] shrink-0">
      <div className="flex flex-col w-[360px] ml-[1px] border border-[#c4c4c4] border-t-0 bg-white shrink-0 overflow-hidden">
        <div className="flex h-[20px] pt-[2px] shrink-0 bg-[#f2f2f2] border-b-2 border-[#d5d5d5] text-[#333] items-stretch">
          <div className="flex items-center w-[30px] shrink-0 pl-[7px] border-r border-[#dcdcdc]">#</div>
          <div className="flex items-center w-[42px] shrink-0 pl-[2px] border-r border-[#dcdcdc]">Layer</div>
          <div className="flex items-center w-[84px] shrink-0 pl-[2px] border-r border-[#dcdcdc]">Mode</div>
          <div className="flex items-center w-[79px] shrink-0 pl-[3px] border-r border-[#dcdcdc]">Spd/Pwr</div>
          <div className="flex items-center w-[52px] shrink-0 pl-[3px] border-r border-[#dcdcdc]">Output</div>
          <div className="flex items-center w-[41px] shrink-0 pl-[3px] border-r border-[#dcdcdc]">Show</div>
          <div className="flex items-center w-[31px] shrink-0 pl-[3px]">Air</div>
        </div>
        {[
          ["C00", "00", "bg-[#0f2a3f] text-[#b9c6d2]", "70.9 / 95.0", true],
          ["C25", "25", "bg-[#500a78] text-[#f3d9ff]", "23.6 / 20.0", false],
          ["C09", "09", "bg-[#0000a0] text-[#dfe3ff]", "236.2 / 20.0", false],
        ].map(([c, n, sw, sp, sel]) => (
          <div key={c as string} className={"flex items-center h-[23px] shrink-0 " + (sel ? "bg-[#2c83c3] text-white" : "")}>
            <div className="w-[31px] pl-[3px] shrink-0">{c}</div>
            <div className={"flex items-center justify-center w-[30px] h-[20px] ml-[2px] shrink-0 " + sw}>{n}</div>
            <Combo value="Line" className="w-[83px] h-[22px] ml-[10px] !text-[#333]" />
            <div className="w-[79px] pl-[4px] shrink-0 whitespace-nowrap">{sp}</div>
            <div className="flex w-[52px] shrink-0 pl-[16px]"><Toggle /></div>
            <div className="flex w-[41px] shrink-0 pl-[10px]"><Toggle /></div>
            <div className="flex w-[31px] shrink-0 pl-[15px]"><Toggle /></div>
          </div>
        ))}
        <div className="flex-1" />
        <div className="flex items-center h-[14px] shrink-0 border-t border-[#d0d0d0] bg-[#f8f8f8]">
          <div className="flex items-center justify-center w-[15px] h-full border-r border-[#e0e0e0] text-[#666]"><svg viewBox="0 0 6 10" width="5" height="8"><path d="M5.500 1v8L.5 5z" fill="currentColor" /></svg></div>
          <div className="flex-1" />
          <div className="w-[19px] h-full bg-[#e2e2e2]" />
          <div className="flex items-center justify-center w-[14px] h-full text-[#666]"><svg viewBox="0 0 6 10" width="5" height="8"><path d="M.5 1v8L5.500 5z" fill="currentColor" /></svg></div>
        </div>
      </div>
      <div className="flex flex-col w-[26px] ml-[2px] mt-[20px]">
        <Btn className="h-[19px]"><svg viewBox="0 0 12 8" width="11" height="7"><path d="M1 6.500L6 1.500l5 5" fill="none" stroke={k} strokeWidth="2.200" /></svg></Btn>
        <Btn className="h-[19px]"><svg viewBox="0 0 12 8" width="11" height="7"><path d="M1 1.500l5 5 5-5" fill="none" stroke={k} strokeWidth="2.200" /></svg></Btn>
        <Btn className="h-[23px] mt-[20px]"><Svg s={16}><path d="M3 4.500h14M7.500 4.500V2h5v2.500M4.500 5.500V18h11V5.500z" fill="none" stroke="#111" strokeWidth="1.700" /><path d="M8 8v7.500M10 8v7.500M12 8v7.500" stroke="#111" strokeWidth="1.200" /></Svg></Btn>
        <Btn className="h-[20px] mt-[19px]"><svg viewBox="0 0 8 12" width="7" height="11"><path d="M1.500 1l5 5-5 5" fill="none" stroke={k} strokeWidth="2.200" /></svg></Btn>
        <Btn className="h-[19px]"><svg viewBox="0 0 8 12" width="7" height="11"><path d="M6.500 1l-5 5 5 5" fill="none" stroke={k} strokeWidth="2.200" /></svg></Btn>
      </div>
    </div>
    <Grip className="w-[6px] h-[18px] ml-[-6px] mt-[6px] mb-[-3px]" />
    <div className="flex flex-col h-[80px] ml-[3px] shrink-0 border border-[#e0e0e0] rounded-[2px] bg-[#ececec] pt-[3px]">
      <div className="flex items-center h-[24px]">
        <span className="w-[118px] text-right">Layer Color</span>
        <div className="w-[76px] h-[23px] ml-[6px] bg-black shrink-0" />
        <span className="w-[95px] text-right">Speed (in/m)</span>
        <Spin right value="70.9" className="w-[76px] ml-[7px]" />
      </div>
      <div className="flex items-center h-[20px] mt-[2px]">
        <span className="w-[118px] text-right">Pass Count</span>
        <Spin right value="2" className="w-[76px] ml-[6px]" />
        <span className="w-[95px] text-right">Power Max (%)</span>
        <Spin right value="95.00" className="w-[76px] ml-[7px]" />
      </div>
      <div className="flex items-center h-[20px] mt-[4px]">
        <span className="w-[118px] text-right text-[#c6c6c6]">Interval (in)</span>
        <Spin off right value="0.0039" className="w-[76px] ml-[6px]" />
      </div>
    </div>
    <div className="flex items-start h-[24px] mt-[3px] mr-[-2px] ml-[1px] shrink-0 border-t border-[#d2d2d2]">
      <div className="flex items-center justify-center w-[102px] h-[24px] mt-[-1px] bg-[#f6f6f6] border-x border-b border-[#d2d2d2] rounded-b-[2px]">Cuts / Layers</div>
      <div className="flex items-center justify-center w-[57px] h-[22px] bg-[#dcdcdc] border-r border-[#cfcfcf]">Move</div>
      <div className="flex items-center justify-center w-[71px] h-[22px] bg-[#dcdcdc]">Console</div>
    </div>
    <div className="mt-[8px] mr-[-2px]"><Title>Laser</Title></div>
    <div className="h-[21px] flex items-center ml-[1px] shrink-0">Disconnected</div>
    <div className="flex gap-[4px] ml-[1px] pt-[1px] h-[40px]">
      <Btn className="w-[128px] h-[39px] gap-[2px]"><svg viewBox="0 0 16 16" width="16" height="16"><path d="M0 0h6.500v16H0zM9 0h6.500v16H9z" fill={k} /></svg>Pause</Btn>
      <Btn className="w-[126px] h-[39px]"><div className="w-[16px] h-[16px] bg-black mr-[1px]" />Stop</Btn>
      <Btn className="w-[127px] h-[39px] gap-[2px]"><svg viewBox="0 0 16 16" width="15" height="16"><path d="M1 0l14 8-14 8z" fill={k} /></svg>Start</Btn>
    </div>
    <div className="flex gap-[4px] ml-[1px] mt-[1px] pt-[1px] h-[41px]">
      <Btn className="w-[95px] h-[40px]"><Svg s={17}><path d="M2 6V2h4M14 2h4v4M18 14v4h-4M6 18H2v-4" fill="none" stroke={k} strokeWidth="2.400" /></Svg>Frame</Btn>
      <Btn className="w-[94px] h-[40px]"><Svg s={17}><circle cx="10" cy="10" r="7.800" fill="none" stroke={k} strokeWidth="2.200" strokeDasharray="7 2.800" /></Svg>Frame</Btn>
      <Btn className="w-[94px] h-[40px]">Save GCode</Btn>
      <Btn className="w-[94px] h-[40px]">Run GCode</Btn>
    </div>
    <div className="flex items-center mt-[1px] ml-[1px] h-[23px]">
      <Btn className="w-[81px] h-[23px]"><Svg s={16}><path d="M10 1L1 10h2.500v8H8v-6h4v6h4.500v-8H19z" fill="#fff" stroke={k} strokeWidth="1.800" /></Svg>Home</Btn>
      <Btn className="w-[81px] h-[22px] ml-[6px]">Go to Origin</Btn>
      <span className="w-[74px] ml-[20px]">Start From:</span>
      <Combo value="User Origin" className="w-[126px] h-[22px]" />
    </div>
    <div className="flex mt-[20px] ml-[1px] h-[51px] shrink-0">
      <div className="w-[197px] shrink-0 flex items-end"><div className="flex items-center gap-[6px] h-[14px] mb-[3px]"><Toggle kind="red" /><span>Cut Selected Graphics</span></div></div>
      <span className="w-[59px] shrink-0 mt-[10px] whitespace-nowrap">Job Origin</span>
      <div className="w-[122px] h-[48px] ml-[9px] shrink-0 grid grid-cols-[39px_39px_39px] bg-[#e9e9e9] border border-[#e2e2e2] pl-[1px] items-center">
        {[0, 1, 2, 3, 4, 5, 6, 7, 8].map((i) => (
          <div key={i} className="flex items-center justify-center w-[15px] h-[15px] rounded-full border border-[#b9b9b9] bg-[#f7f7f7]">{i === 4 && <div className="w-[7px] h-[7px] rounded-full bg-[#333]" />}</div>
        ))}
      </div>
    </div>
    <div className="flex ml-[1px] h-[46px] shrink-0">
      <div className="flex flex-col w-[176px] shrink-0">
        <div className="flex items-center gap-[6px] h-[23px] text-[#c6c6c6]"><Toggle kind="dark" /><span>Use Selection Origin</span></div>
        <div className="flex items-center gap-[6px] h-[23px] mt-[1px] text-[#222]"><Toggle /><span>Optimize Cut Path</span></div>
      </div>
      <div className="flex flex-col">
        <div className="flex items-center justify-center w-[213px] h-[24px] rounded-[2px] border border-[#bbb] bg-[#d7d7d7]">
          <svg viewBox="0 0 20 20" width="18" height="18" className="mr-[1px]"><path d="M10 1v18" stroke="#d81a1a" strokeWidth="1.600" strokeDasharray="3 1.500" /><path d="M5 10h10" stroke="#d81a1a" strokeWidth="1.600" /><path d="M1 10h3M16 10h3" stroke="#333" strokeWidth="1.800" /></svg>
          Show Last Position
        </div>
        <Btn className="w-[213px] h-[22px] mt-[1px]">Optimization Settings</Btn>
      </div>
    </div>
    <div className="flex items-center ml-[1px] mt-[2px] h-[22px]">
      <Btn className="w-[80px] h-[22px]">Devices</Btn>
      <Combo value="ttyUSB6" className="w-[148px] h-[22px] ml-[6px]" />
      <Combo value="GRBL-4" className="w-[147px] h-[22px] ml-[7px]" />
    </div>
    <div className="flex items-start h-[25px] mt-[44px] mr-[-2px] ml-[1px] shrink-0 border-t border-[#d2d2d2]">
      <div className="flex items-center justify-center w-[56px] h-[25px] mt-[-1px] bg-[#f6f6f6] border-x border-[#d2d2d2]">Laser</div>
      <div className="flex items-center justify-center w-[66px] h-[22px] bg-[#dcdcdc] border-r border-b border-[#cfcfcf]">Library</div>
    </div>
  </div>
);

const TaskIcon = ({ children, on, lit, badge }: { children?: React.ReactNode; on?: boolean; lit?: boolean; badge?: boolean }) => (
  <div className={"relative flex items-center justify-center w-[40px] h-[41px] ml-[6px] shrink-0 " + (lit ? "bg-[#4a4a4a]" : "")}>
    {children}
    {badge && <span className="absolute left-[2px] top-[1px] flex items-center justify-center w-[12px] h-[12px] rounded-full bg-[#5f6870] text-white text-[10px] font-bold">2</span>}
    {on && <div className="absolute bottom-0 left-0 right-0 h-[3px] bg-[#8fa876]" />}
  </div>
);

export default function App() {
  return (
    <div className="flex flex-col w-[1600px] h-[1200px] overflow-hidden bg-[#efefef] text-[12px] leading-none text-[#222] [font-family:'DejaVu_Sans',sans-serif]">
      <div className="relative flex items-center justify-center h-[28px] shrink-0 bg-linear-to-b from-[#ececec] to-[#e6e6e6] text-[13px] font-semibold text-[#3c3c3c] [font-family:'Noto_Sans',sans-serif]">
        middle-right-side - LightBurn 1.3.01
        <div className="absolute right-[8px] top-[5px] flex items-center">
          <div className="w-[9px] h-[2px] bg-[#333] mr-[22px] mt-[3px]" />
          <div className="w-[9px] h-[9px] border border-[#333] mr-[19px]" />
          <div className="flex items-center justify-center w-[18px] h-[18px] rounded-full bg-[#8db36e]"><svg viewBox="0 0 10 10" width="9" height="9"><path d="M1.500 1.500l7 7M8.500 1.500l-7 7" stroke="#fff" strokeWidth="1.500" /></svg></div>
        </div>
      </div>
      <div className="flex items-center h-[23px] pt-[2px] shrink-0 border-b border-[#d0d0d0] bg-[#efefef] text-[#222]">
        <span className="ml-[10px] w-[35px]"><u>F</u>ile</span>
        <span className="w-[38px]"><u>E</u>dit</span>
        <span className="w-[46px]">Tools</span>
        <span className="w-[62px]"><u>A</u>rrange</span>
        <span className="w-[81px]">Laser Tools</span>
        <span className="w-[63px]"><u>W</u>indow</span>
        <span className="w-[74px]">Language</span>
        <span><u>H</u>elp</span>
      </div>
      <div className="flex items-center h-[32px] pt-[2px] shrink-0 border-b-2 border-[#c8c8c8] bg-linear-to-b from-[#f8f8f8] to-[#f0f0f0] pl-[3px]">
        <Grip className="w-[9px] h-[18px]" />
        {ToolIcons.map((g, i) => (
          <React.Fragment key={i}>
            {i > 0 && <Sep className={i === 5 ? "w-[6px]" : "w-[7px]"} />}
            {g.map((ic, j) => <Slot key={j}>{ic}</Slot>)}
          </React.Fragment>
        ))}
        <Sep className="w-[7px]" />
        <Grip className="w-[10px] h-[18px]" />
        {ToolIcons2.map((g, i) => (
          <React.Fragment key={i}>
            {i > 0 && <Sep />}
            {g.map((ic, j) => <Slot key={j}>{ic}</Slot>)}
          </React.Fragment>
        ))}
      </div>
      <Panel2 />
      <div className="flex flex-1 min-h-0">
        <LeftBar />
        <Canvas />
        <Dock />
      </div>
      <div className="flex items-center h-[32px] pt-[1px] shrink-0 border-b-2 border-[#c4c4c4] bg-[#f6f6f6] pl-[2px]">
        <Grip className="w-[9px] h-[18px] mr-[6px]" />
        <div className="flex gap-[9px]">
          {swatches.map(([n, bg, tc]) => (
            <div key={n} className={"flex items-center justify-center w-[18px] h-[18px] text-[9.5px] [font-family:'Liberation_Sans',sans-serif] " + bg + " " + tc}>{n}</div>
          ))}
        </div>
        <div className="flex items-center justify-center w-[24px] h-[24px] ml-[13px] rounded-[2px] border border-[#aaa] bg-[#e4c4b4]">
          <div className="flex items-center justify-center w-[19px] h-[18px] bg-[#f26522] text-[#222] text-[9.5px] [font-family:'Liberation_Sans',sans-serif]">T1</div>
        </div>
        <div className="flex items-center justify-center w-[18px] h-[18px] ml-[6px] bg-[#0a90d8] text-white text-[9.5px] [font-family:'Liberation_Sans',sans-serif]">T2</div>
      </div>
      <div className="flex items-center h-[25px] shrink-0 bg-[#f0f0f0] text-[#222]">
        <div className="flex items-center gap-[6px] ml-[2px] w-[69px]"><Toggle />Move</div>
        <div className="flex items-center gap-[6px] w-[62px]"><Toggle />Size</div>
        <div className="flex items-center gap-[6px] w-[78px]"><Toggle />Rotate</div>
        <div className="flex items-center gap-[5px] w-[82px]"><Toggle />Shear</div>
        <span>x: -2.572, y: 3.714 in</span>
      </div>
      <div className="flex items-stretch h-[41px] shrink-0 bg-[#2e2e2e]">
        <div className="flex items-center justify-center w-[42px] shrink-0">
          <svg viewBox="0 0 32 32" width="31" height="31"><circle cx="16" cy="16" r="14.500" fill="none" stroke="#e6e6e6" strokeWidth="2" /><path d="M9 9v10a4 4 0 004 4h7a4 4 0 004-4v-6a3 3 0 00-6 0v6M12.500 13a3 3 0 015.500 0" fill="none" stroke="#e6e6e6" strokeWidth="2.200" /></svg>
        </div>
        <div className="flex items-center justify-center w-[40px] ml-[4px] mr-[2px] shrink-0">
          <div className="w-[30px] h-[26px] rounded-[1px] bg-[#8aa661] border-t-2 border-[#9cb577]" />
        </div>
        <TaskIcon on badge>
          <div className="flex items-center justify-center w-[28px] h-[30px] rounded-[6px] bg-[#f0703a]"><svg viewBox="0 0 20 20" width="22" height="22"><path d="M15 4.500a7 7 0 11-10.500 2c.5 2 1.500 2.500 2.500 2.500.5-2 1.500-3 3-3.500-.5 1 0 2 1 2.500 1 .5 2 1.500 1 3-1 1.500-3 1-4 0 .5 3 4 4 6 2s2-6 1-8.500z" fill="#fff" /></svg></div>
        </TaskIcon>
        <TaskIcon>
          <div className="w-[28px] h-[31px] rounded-[5px] bg-[#151515] border border-[#3a3a3a] pl-[3px] pt-[4px] text-[8px] text-white font-bold">$_</div>
        </TaskIcon>
        <TaskIcon on lit>
          <div className="w-[32px] h-[33px] bg-[#8e1b22] overflow-hidden"><svg viewBox="0 0 32 33" width="32" height="33"><path d="M4 8C10 1 22 1 28 10" fill="none" stroke="#fff" strokeWidth="2" /><path d="M6 30c0-6 4-8 8-9-3-1-7 0-9 2 0-5 5-11 13-11 4 0 8 2 9 6l-3 1c1 3-1 4-3 3-1 3-3 4-3 8z" fill="#fff" /></svg></div>
        </TaskIcon>
        <TaskIcon on>
          <svg viewBox="0 0 32 30" width="32" height="30"><path d="M4 6h9l2-3h11v3z" fill="#f2f2f2" /><path d="M2 6h28v22H2z" fill="#8aa661" /></svg>
        </TaskIcon>
        <TaskIcon on>
          <div className="flex items-center justify-center w-[30px] h-[31px] rounded-[6px] bg-[#f2f2f2]"><div className="flex items-center justify-center w-[22px] h-[22px] rounded-full bg-[#7db24a]"><div className="w-[12px] h-[12px] bg-[radial-gradient(#fff_1px,transparent_1.2px)] bg-[length:4px_4px]" /></div></div>
        </TaskIcon>
        <TaskIcon on badge>
          <svg viewBox="0 0 32 26" width="30" height="25"><rect x="7" y="3" width="18" height="10" fill="#0000a8" /><path d="M11 3v10M16 3v10M21 3v10" stroke="#333" /><path d="M3 17h24" stroke="#d01818" strokeWidth="3" /><path d="M25 14l4 3-4 3z" fill="#d01818" /></svg>
        </TaskIcon>
        <TaskIcon on>
          <div className="flex items-center justify-center w-[28px] h-[31px] rounded-[6px] bg-[#8f8fd0]"><div className="flex flex-col gap-[2px] w-[17px] h-[24px] bg-white pt-[5px] px-[3px]"><div className="h-px bg-[#777]" /><div className="h-px bg-[#777]" /><div className="h-px bg-[#777]" /><div className="h-px bg-[#777]" /></div></div>
        </TaskIcon>
        <div className="flex items-center ml-auto pr-[4px] text-white">
          <svg viewBox="0 0 14 20" width="11" height="18" className="mr-[14px]"><rect x="0" y="0" width="14" height="20" rx="7" fill="#6a6a6a" /><path d="M4 6l6 8-3 2V4l3 2-6 8" fill="none" stroke="#3e3e3e" /></svg>
          <svg viewBox="0 0 20 20" width="19" height="19" className="mr-[7px]"><path d="M9 2l7 2v6c0 4-3 6-7 8-4-2-7-4-7-8V4z" fill="#d8d8d8" stroke="#fff" /><path d="M9 5v10c-2-1-4-3-4-5V6z" fill="#777" /><circle cx="15" cy="15" r="4" fill="#c55a2a" /></svg>
          <svg viewBox="0 0 20 20" width="17" height="17" className="mr-[9px]"><path d="M5 2h10v4H5zM1 7h18v8h-4v-3H5v3H1zM6 13h8v5H6z" fill="#e8e8e8" /></svg>
          <svg viewBox="0 0 16 20" width="14" height="17" className="mr-[12px]"><rect x="1" y="1" width="14" height="18" rx="1" fill="none" stroke="#e8e8e8" strokeWidth="1.800" /><path d="M8 5l3 4H5zM5 11h6v2H5z" fill="#e8e8e8" /></svg>
          <svg viewBox="0 0 20 18" width="17" height="15" className="mr-[10px]"><path d="M1 6c5-5 13-5 18 0M4 9.500c3.500-3 8.500-3 12 0M7 12.500c2-1.500 4-1.500 6 0" fill="none" stroke="#e8e8e8" strokeWidth="1.800" /><circle cx="10" cy="15.500" r="1.800" fill="#e8e8e8" /></svg>
          <svg viewBox="0 0 16 18" width="15" height="17" className="mr-[14px]"><path d="M5 3l10-2v12" fill="none" stroke="#e8e8e8" strokeWidth="2" /><path d="M5 3v12" stroke="#e8e8e8" strokeWidth="2" /><ellipse cx="3" cy="15" rx="2.800" ry="2.200" fill="#e8e8e8" /><ellipse cx="12.500" cy="13.500" rx="2.800" ry="2.200" fill="#e8e8e8" /></svg>
          <span className="text-[13px] font-bold text-[#dfe6e6] [font-family:'Noto_Sans',sans-serif]">7:39 PM</span>
        </div>
      </div>
    </div>
  );
}
